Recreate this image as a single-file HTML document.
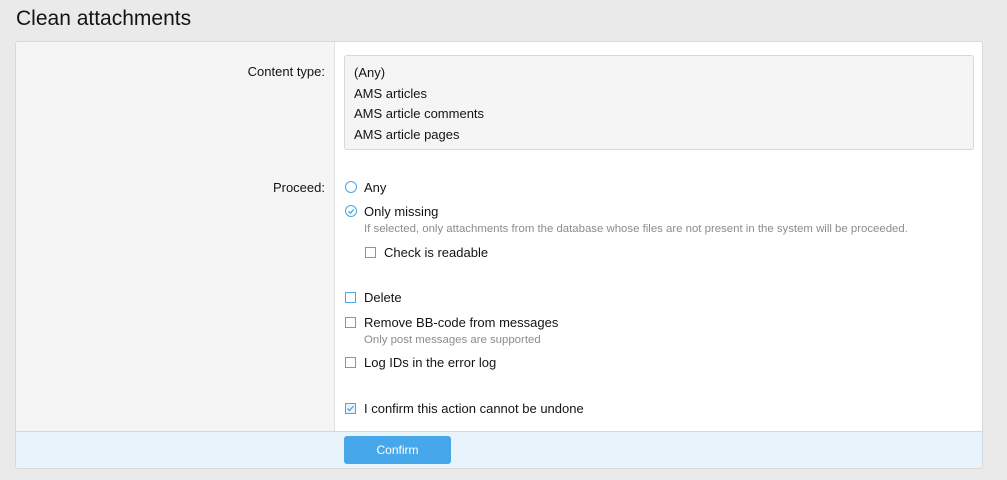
<!DOCTYPE html>
<html><head><meta charset="utf-8"><style>
*{margin:0;padding:0;box-sizing:border-box}
body{width:1007px;height:480px;background:#eaeaea;font-family:"Liberation Sans",sans-serif;font-size:13px;color:#141414;position:relative;overflow:hidden}
.a{position:absolute;white-space:nowrap}
h1{position:absolute;left:16px;top:7px;font-size:21px;font-weight:normal;color:#141414}
.panel{position:absolute;left:15px;top:41px;width:968px;height:428px;background:#fff;border:1px solid #d8d8d8;border-radius:3px;overflow:hidden}
.left{position:absolute;left:0;top:0;width:319px;height:389px;background:#f5f5f5;border-right:1px solid #e0e0e0}
.foot{position:absolute;left:0;top:389px;width:100%;height:38px;background:#e9f3fb;border-top:1px solid #d0d8de}
.btn{position:absolute;left:328px;top:4px;width:107px;height:28px;background:#47a7eb;border-radius:3px;color:#fff;text-align:center;line-height:28px;font-size:12px}
.sel{position:absolute;left:328px;top:13px;width:630px;height:95px;background:#f5f5f5;border:1px solid #d8d8d8;border-radius:3px;padding:7px 9px}
.sel div{line-height:20.7px}
.lbl{position:absolute;right:657px;text-align:right}
.cb{position:absolute;width:11px;height:11px;border:1.3px solid #47a7eb;background:#fff}
.rd{position:absolute;width:12px;height:12px;border:1.3px solid #47a7eb;border-radius:50%;background:#fff}
.hint{color:#8c8c8c;font-size:11.4px}
</style></head><body>
<h1>Clean attachments</h1>
<div class="panel">
<div class="left"></div>
<div class="lbl a" style="top:22px">Content type:</div>
<div class="sel"><div>(Any)</div><div>AMS articles</div><div>AMS article comments</div><div>AMS article pages</div></div>
<div class="lbl a" style="top:138px">Proceed:</div>
<div class="rd" style="left:329px;top:139px"></div><div class="a" style="left:348px;top:138px">Any</div>
<div class="rd" style="left:329px;top:163px"></div>
<svg class="a" style="left:329px;top:163px" width="12" height="12"><path d="M3.5 6.2l2 2 3.2-3.8" stroke="#47a7eb" stroke-width="1.3" fill="none"/></svg>
<div class="a" style="left:348px;top:162px">Only missing</div>
<div class="a hint" style="left:348px;top:181px">If selected, only attachments from the database whose files are not present in the system will be proceeded.</div>
<div class="cb" style="left:349px;top:205px"></div><div class="a" style="left:368px;top:203px">Check is readable</div>
<div class="cb" style="left:329px;top:250px"></div><div class="a" style="left:348px;top:248px">Delete</div>
<div class="cb" style="left:329px;top:275px"></div><div class="a" style="left:348px;top:273px">Remove BB-code from messages</div>
<div class="a hint" style="left:348px;top:292px">Only post messages are supported</div>
<div class="cb" style="left:329px;top:315px"></div><div class="a" style="left:348px;top:313px">Log IDs in the error log</div>
<div class="cb" style="left:329px;top:361px;background:#e9f3fb"></div>
<svg class="a" style="left:329px;top:361px" width="11" height="11"><path d="M2.5 5.5l2 2 4-4.5" stroke="#47a7eb" stroke-width="1.3" fill="none"/></svg>
<div class="a" style="left:348px;top:359px">I confirm this action cannot be undone</div>
<div class="foot"><div class="btn">Confirm</div></div>
</div>
</body></html>
